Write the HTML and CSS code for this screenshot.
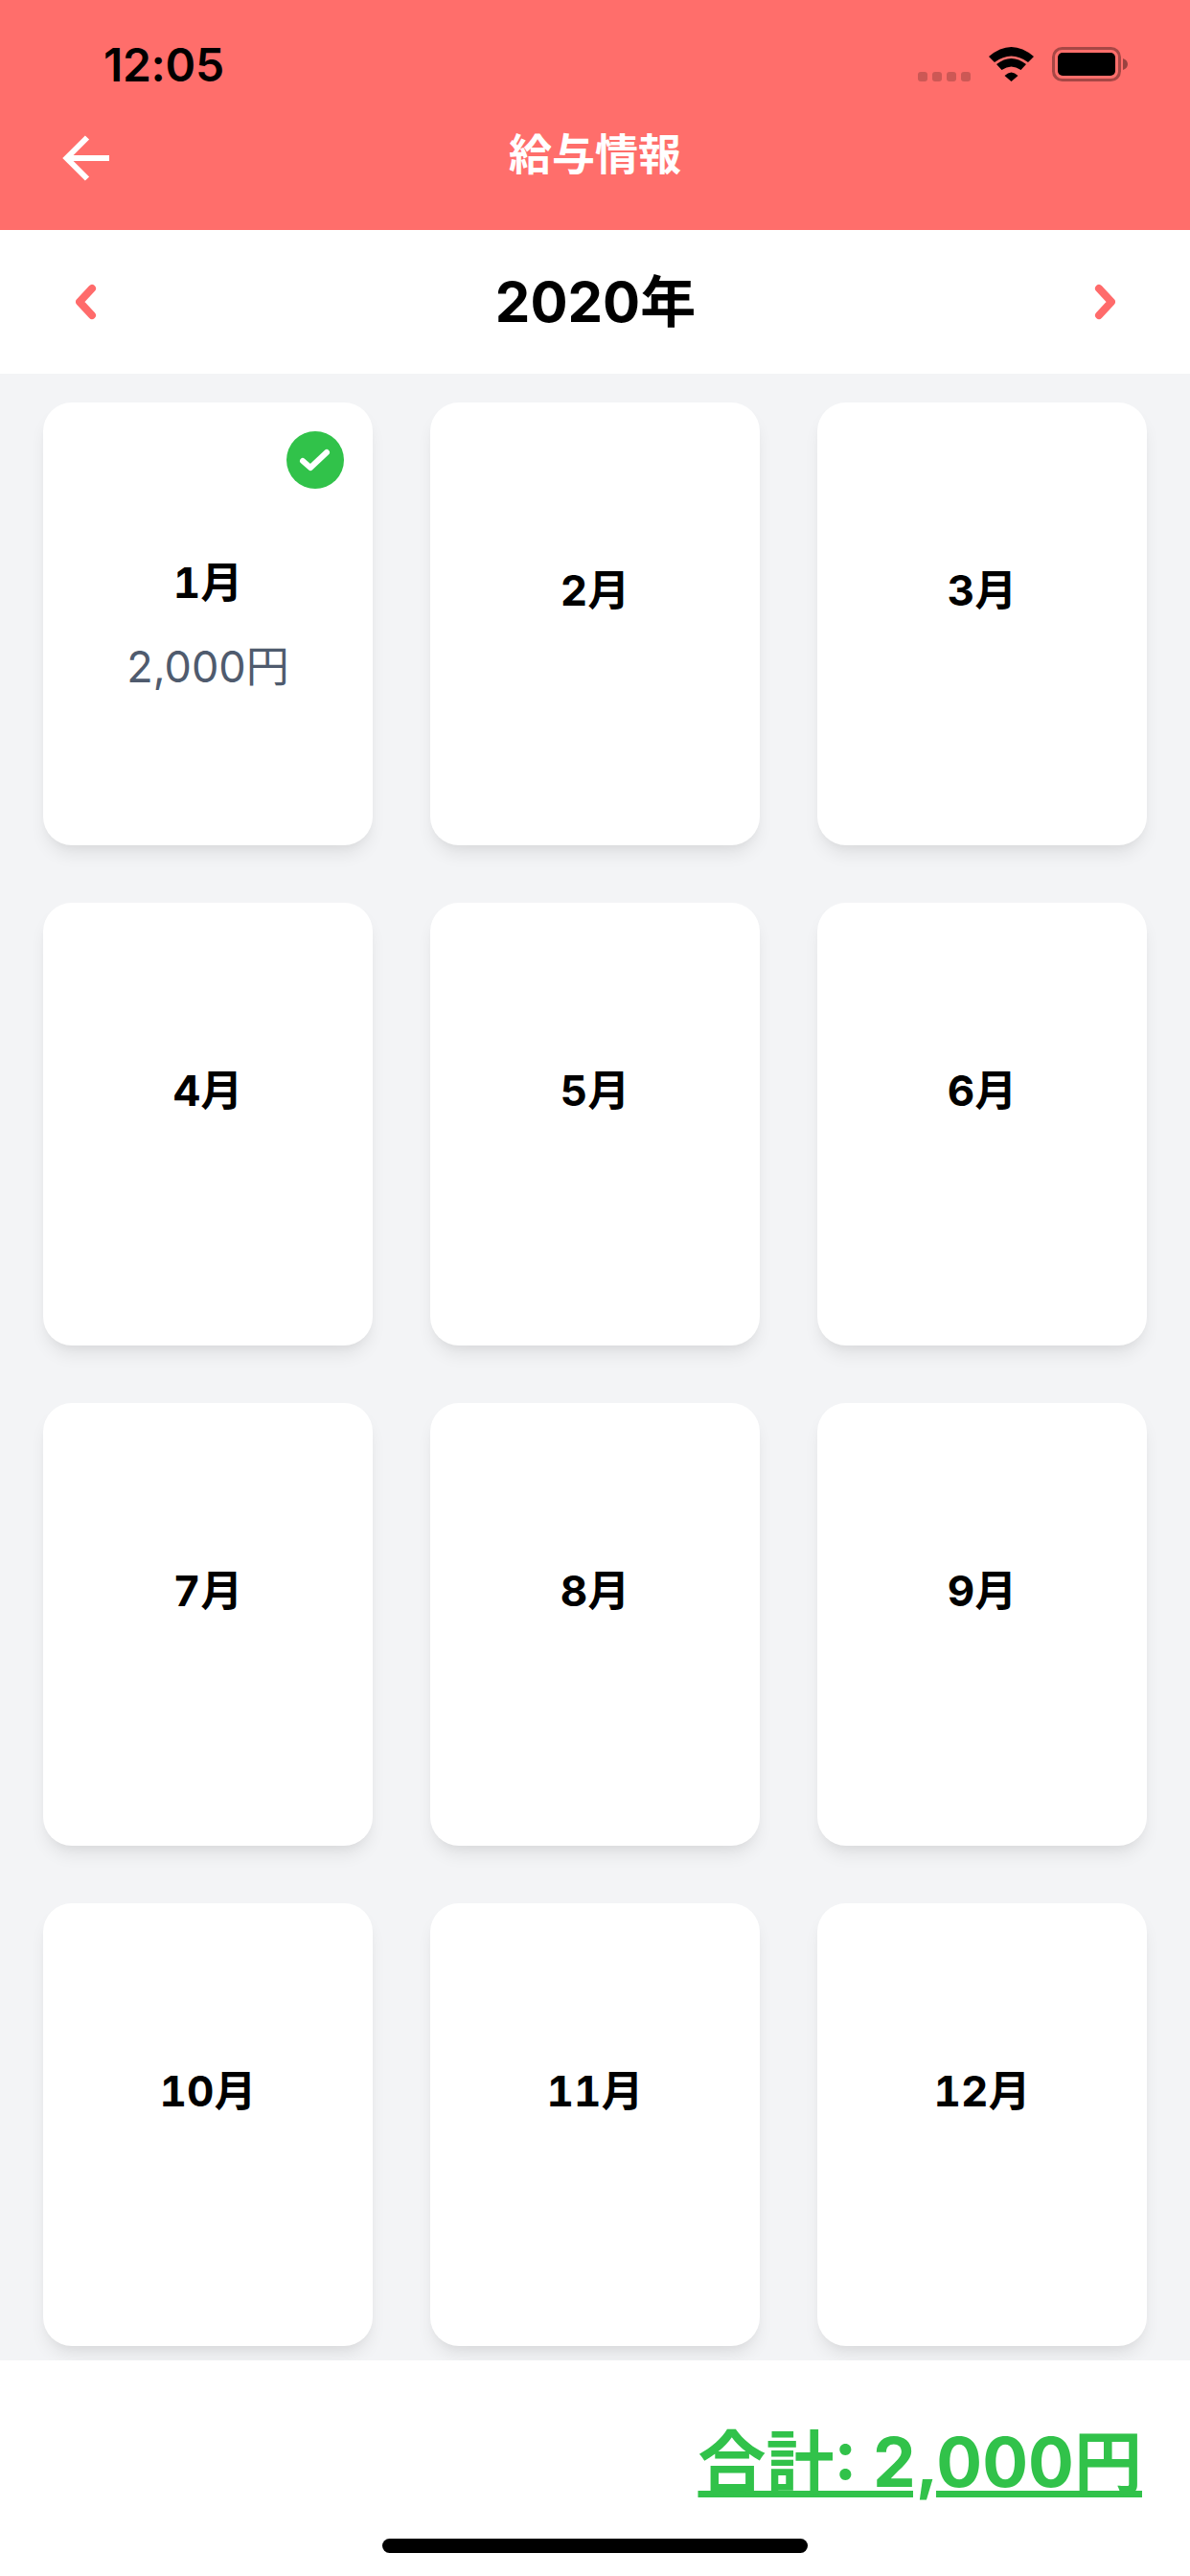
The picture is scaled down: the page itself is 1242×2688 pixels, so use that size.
FILE: index.html
```html
<!DOCTYPE html>
<html lang="ja">
<head>
<meta charset="utf-8">
<title>給与情報</title>
<link rel="stylesheet" href="styles.css">
</head>
<body>
<div class="app">
  <header class="header">
    <div class="status">
      <span class="time">12:05</span>
      <div class="status-icons">
        <div class="signal"><i></i><i></i><i></i><i></i></div>
        <svg class="wifi" width="47" height="36" viewBox="0 0 47 36"><path d="M0 10Q23.500-10 47 10L41 16Q23.500 3 6 16Z"/><path d="M8 18Q23.500 6 39 18L33.500 24Q23.500 17 13.500 24Z"/><path d="M16.500 30Q23.500 23 30.500 30L23.500 36Z"/></svg>
        <svg class="battery" width="79" height="36" viewBox="0 0 79 36"><rect x="1.500" y="1.500" width="69" height="33" rx="9" fill="none" stroke="#000" stroke-opacity=".35" stroke-width="3"/><rect x="6" y="6" width="60" height="24" rx="5"/><path d="M74 12C77 13 79 15 79 18S77 23 74 24Z" fill-opacity=".4"/></svg>
      </div>
    </div>
    <div class="nav">
      <svg class="back" width="60" height="60" viewBox="0 0 60 60"><path d="M54 30H10M31 8.500 9.500 30 31 51.500" fill="none" stroke="#fff" stroke-width="6"/></svg>
      <h1 class="title">給与情報</h1>
    </div>
  </header>
  <div class="year-bar">
    <svg class="chev" width="24" height="44" viewBox="0 0 24 44"><path d="M17 8 4 22 17 36" fill="none" stroke="#ff6b6b" stroke-width="8" stroke-linecap="round" stroke-linejoin="round"/></svg>
    <span class="year">2020年</span>
    <svg class="chev" width="24" height="44" viewBox="0 0 24 44"><path d="M7 8 20 22 7 36" fill="none" stroke="#ff6b6b" stroke-width="8" stroke-linecap="round" stroke-linejoin="round"/></svg>
  </div>
  <main class="months">
    <div class="card">
      <svg class="badge" width="60" height="60" viewBox="0 0 60 60"><circle cx="30" cy="30" r="30" fill="#31c24a"/><path d="M17 31 25 38 42 22" fill="none" stroke="#fff" stroke-width="6" stroke-linecap="round" stroke-linejoin="round"/></svg>
      <div class="month">1月</div><div class="amount">2,000円</div>
    </div>
    <div class="card"><div class="month">2月</div><div class="amount"></div></div>
    <div class="card"><div class="month">3月</div><div class="amount"></div></div>
    <div class="card"><div class="month">4月</div><div class="amount"></div></div>
    <div class="card"><div class="month">5月</div><div class="amount"></div></div>
    <div class="card"><div class="month">6月</div><div class="amount"></div></div>
    <div class="card"><div class="month">7月</div><div class="amount"></div></div>
    <div class="card"><div class="month">8月</div><div class="amount"></div></div>
    <div class="card"><div class="month">9月</div><div class="amount"></div></div>
    <div class="card"><div class="month">10月</div><div class="amount"></div></div>
    <div class="card"><div class="month">11月</div><div class="amount"></div></div>
    <div class="card"><div class="month">12月</div><div class="amount"></div></div>
  </main>
  <footer class="footer">
    <div class="total">合計: 2,000円</div>
    <div class="home"></div>
  </footer>
</div>
</body>
</html>
```
FILE: styles.css
```css
* { box-sizing: border-box; }
html, body { margin: 0; padding: 0; }
body { font-family: Inter, "Noto Sans CJK JP", sans-serif; background: #fff; color: #000; }
.app { width: 1242px; height: 2688px; display: flex; flex-direction: column; overflow: hidden; }

.header { height: 240px; background: #ff6e6b; display: flex; flex-direction: column; }
.status { height: 100px; padding: 36px 65px 0 108px; display: flex; justify-content: space-between; align-items: flex-start; }
.time { font-size: 48px; line-height: 64px; font-weight: 600; letter-spacing: -.3px; }
.status-icons { display: flex; align-items: flex-start; padding-top: 13px; }
.status-icons svg { display: block; }
.signal { display: flex; gap: 5px; margin-top: 26px; margin-right: 19px; }
.signal i { width: 10px; height: 10px; border-radius: 3px; background: rgba(0,0,0,.2); }
.wifi { margin-right: 19px; }
.nav { height: 130px; padding-left: 60px; display: flex; align-items: center; position: relative; }
.back { display: block; }
.title { position: absolute; left: 0; right: 0; top: 33px; margin: 0; text-align: center; color: #fff; font-size: 45px; line-height: 58px; font-weight: 700; }

.year-bar { height: 150px; padding: 0 78px 0 79px; display: flex; align-items: center; justify-content: space-between; }
.chev { display: block; }
.year { font-size: 58px; line-height: 80px; font-weight: 700; }

.months { flex: 1; min-height: 0; overflow: hidden; background: #f3f4f6; padding: 30px 45px 0; display: grid; grid-template-columns: repeat(3, 344px); grid-auto-rows: 462px; gap: 60px; }
.card { position: relative; background: #fff; border-radius: 30px; box-shadow: 0 12px 18px -3px rgba(0,0,0,.08), 0 6px 12px -6px rgba(0,0,0,.06); display: flex; flex-direction: column; align-items: center; justify-content: center; }
.badge { position: absolute; top: 30px; right: 30px; }
.month { font-size: 44px; line-height: 60px; font-weight: 700; padding-top: 2px; margin-bottom: 28px; box-sizing: content-box; font-feature-settings: "tnum"; }
.amount { min-height: 44px; font-size: 45px; line-height: 60px; color: #4f5b6e; }

.footer { height: 225px; background: #fff; display: flex; flex-direction: column; align-items: center; }
.total { align-self: flex-end; margin: 58px 50px 0 0; color: #31c24a; font-size: 71px; line-height: 96px; font-weight: 700; text-decoration: underline; text-decoration-thickness: 7px; text-underline-offset: 4px; }
.home { width: 444px; height: 15px; border-radius: 8px; background: #000; margin-top: 32px; }
```
